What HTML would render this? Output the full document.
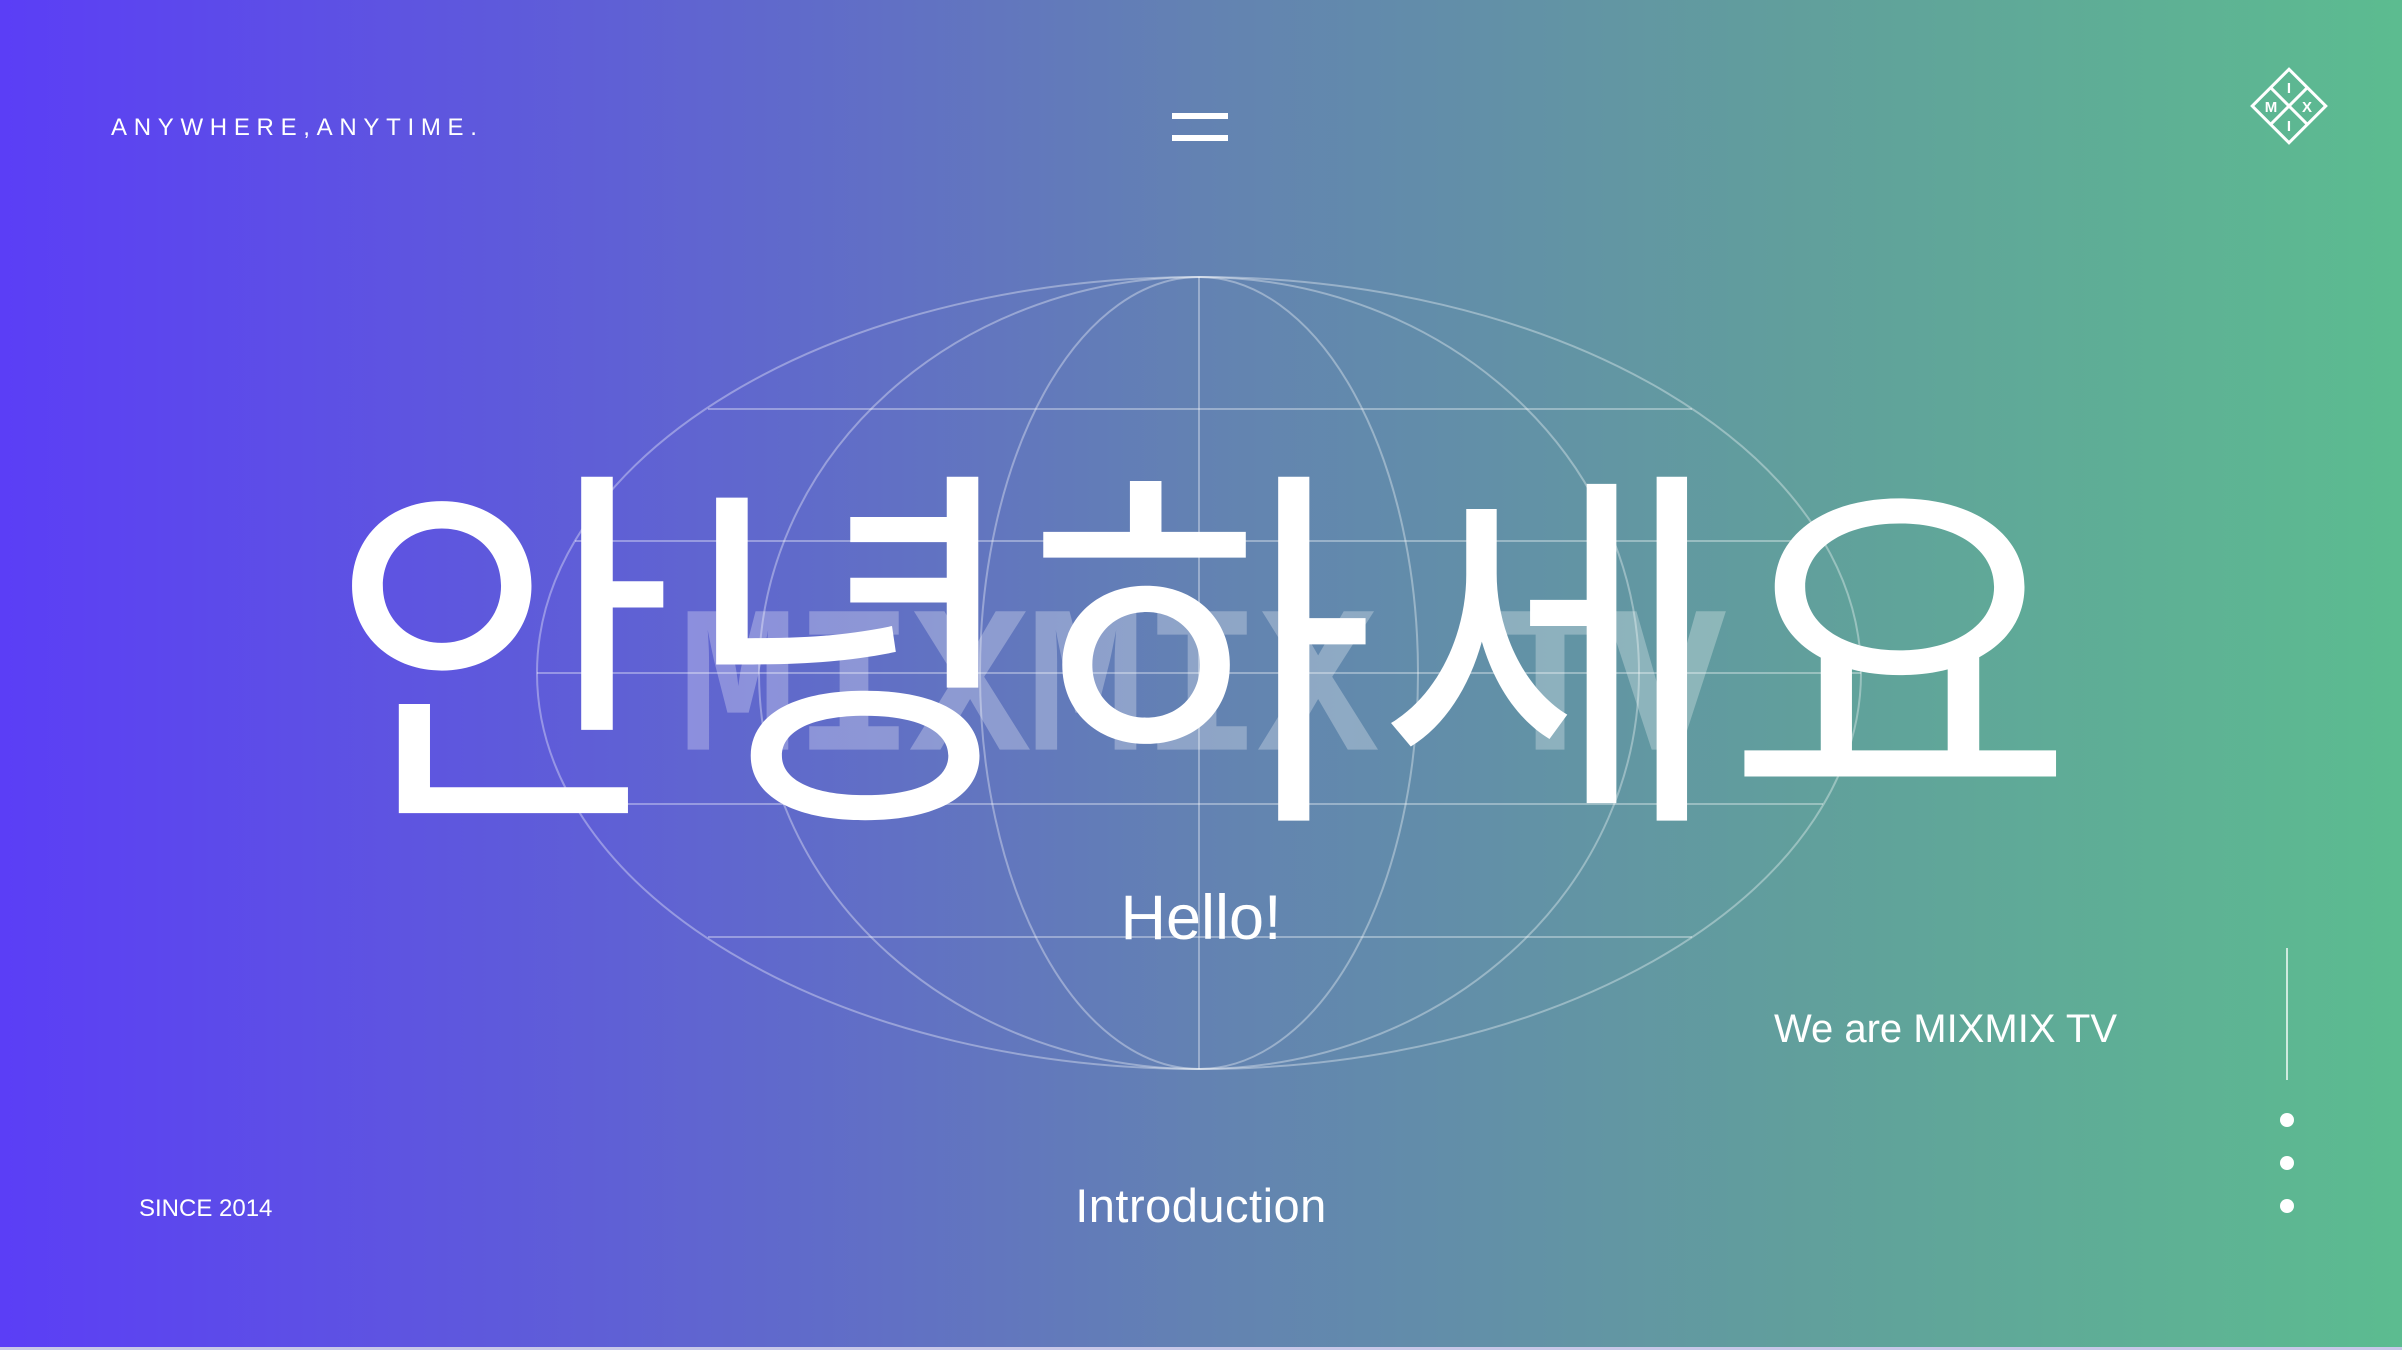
<!DOCTYPE html>
<html><head><meta charset="utf-8"><style>
html,body{margin:0;padding:0}
body{width:2402px;height:1350px;position:relative;overflow:hidden;background:linear-gradient(90deg,#5b3ef6 0%,#5f5fd6 25%,#6382b2 50%,#619f9c 75%,#5cbc90 100%);font-family:"Liberation Sans",sans-serif;color:#fff}
.a{position:absolute;white-space:nowrap}
</style></head><body>
<svg class="a" style="left:0;top:0" width="2402" height="1350">
<g fill="none" stroke="rgba(255,255,255,0.35)" stroke-width="2">
<ellipse cx="1199" cy="673" rx="662" ry="396"/>
<ellipse cx="1199" cy="673" rx="440" ry="396"/>
<ellipse cx="1199" cy="673" rx="219" ry="396"/>
<line x1="1199" y1="277" x2="1199" y2="1069"/>
<line x1="708" y1="409" x2="1692" y2="409"/>
<line x1="575" y1="541" x2="1823" y2="541"/>
<line x1="537" y1="673" x2="1861" y2="673"/>
<line x1="575" y1="804" x2="1823" y2="804"/>
<line x1="708" y1="937" x2="1692" y2="937"/>
</g>
<rect x="1172" y="113" width="56" height="6" fill="#fff"/>
<rect x="1172" y="135" width="56" height="6" fill="#fff"/>
<g transform="translate(2289,106) rotate(45)" fill="none" stroke="#fff" stroke-width="3">
<rect x="-26" y="-26" width="52" height="52"/>
<line x1="0" y1="-26" x2="0" y2="26"/><line x1="-26" y1="0" x2="26" y2="0"/>
</g>
<g fill="#fff" font-family="Liberation Sans" font-weight="bold" font-size="15" text-anchor="middle">
<text x="2289" y="93">I</text><text x="2271" y="112">M</text><text x="2307" y="112">X</text><text x="2289" y="131">I</text>
</g>
<line x1="2287" y1="948" x2="2287" y2="1080" stroke="rgba(255,255,255,0.7)" stroke-width="2"/>
<circle cx="2287" cy="1120" r="7" fill="#fff"/><circle cx="2287" cy="1163" r="7" fill="#fff"/><circle cx="2287" cy="1206" r="7" fill="#fff"/>
<rect x="0" y="1347" width="2402" height="3" fill="#c8c8e8"/>
</svg>
<div class="a" style="left:650px;top:585px;width:1100px;text-align:center;font-family:'Liberation Mono',monospace;font-weight:bold;font-size:200px;line-height:220px;color:rgba(255,255,255,0.28);letter-spacing:-4px;transform:scaleY(1.05)">MIXMIX TV</div>
<div class="a" style="left:111px;top:114px;font-size:24px;letter-spacing:6.7px">ANYWHERE,ANYTIME.</div>
<div class="a" style="left:0;width:2402px;top:430px;text-align:center;font-family:'Liberation Sans','Noto Sans CJK KR',sans-serif;font-size:380px;line-height:460px;letter-spacing:0px">안녕하세요</div>
<div class="a" style="left:0;width:2402px;top:878px;text-align:center;font-size:63px;line-height:80px">Hello!</div>
<div class="a" style="right:285px;top:1004px;font-size:40px;line-height:50px">We are MIXMIX TV</div>
<div class="a" style="left:139px;top:1193px;font-size:24px;line-height:32px">SINCE 2014</div>
<div class="a" style="left:0;width:2402px;top:1180px;text-align:center;font-size:47px;line-height:52px;letter-spacing:0.5px">Introduction</div>
</body></html>
